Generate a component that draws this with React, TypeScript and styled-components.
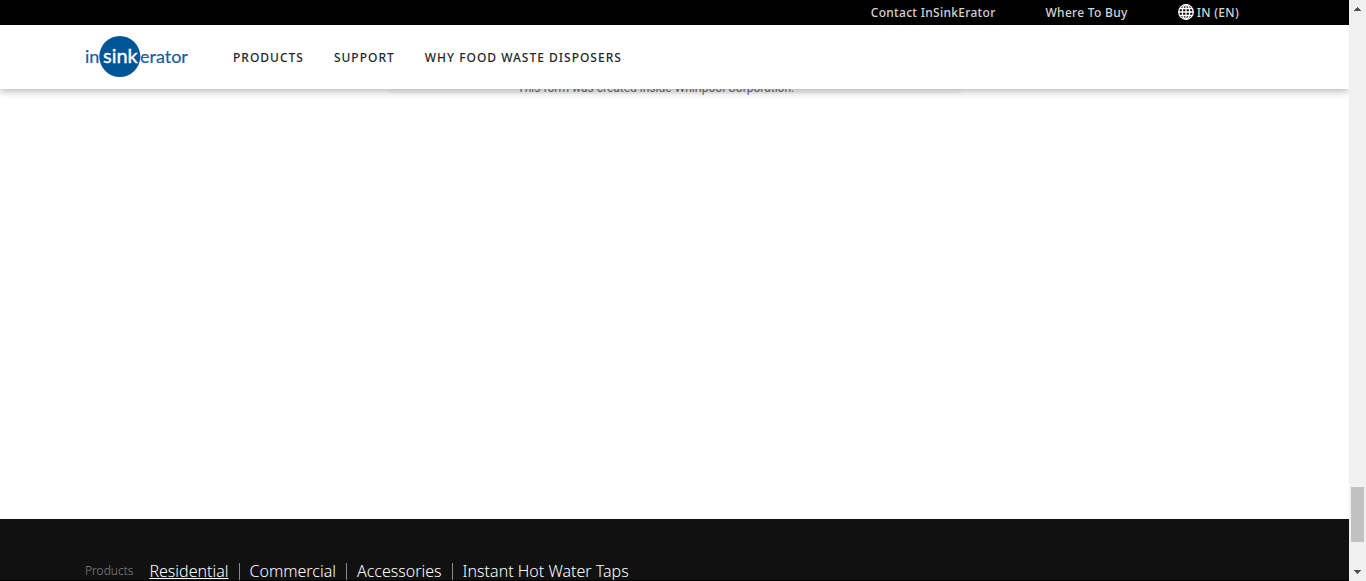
import React from 'react';
import styled, { createGlobalStyle } from 'styled-components';

const GlobalStyle = createGlobalStyle`
  *, *::before, *::after { box-sizing: border-box; }
  html, body { margin: 0; height: 100%; overflow: hidden; }
  body { background: #fff; font-family: "Noto Sans", "Open Sans", sans-serif; }
  #root { height: 100%; }
`;

const Shell = styled.div`
  display: flex;
  height: 100vh;
  overflow: hidden;
`;

const Page = styled.div`
  display: flex;
  flex-direction: column;
  flex: 1;
  min-width: 0;
  overflow: hidden;
`;

const Header = styled.header`
  position: relative;
  z-index: 2;
  flex: none;
  background: #fff;
  box-shadow: 0 2px 8px rgba(0, 0, 0, 0.3);
`;

const UtilityBar = styled.nav`
  display: flex;
  justify-content: flex-end;
  gap: 50px;
  height: 25px;
  padding-right: 110px;
  background: #000;
`;

const UtilityLink = styled.a`
  display: flex;
  align-items: flex-start;
  gap: 3px;
  color: #d4d4d4;
  font-size: 12px;
  font-weight: 500;
  line-height: 26px;
  letter-spacing: 0.025em;
  text-decoration: none;
  white-space: nowrap;
  svg { margin-top: 4px; }
`;

const MainBar = styled.div`
  display: flex;
  align-items: center;
  height: 64px;
  padding: 0 85px;
`;

const LogoLink = styled.a`
  display: block;
  width: 103px;
  height: 42px;
  margin-right: 45px;
  svg { display: block; }
`;

const MainNav = styled.nav`
  display: flex;
  gap: 30px;
  padding-top: 2px;
`;

const NavLink = styled.a`
  color: #22262b;
  font-size: 12px;
  font-weight: 500;
  line-height: 20px;
  letter-spacing: 1px;
  text-decoration: none;
  white-space: nowrap;
`;

const Content = styled.main`
  flex: 1;
  display: flex;
  flex-direction: column;
  align-items: center;
`;

const FormCard = styled.section`
  width: 576px;
  max-width: 100%;
  height: 30px;
  margin-top: -25px;
  padding: 16px 0 0 131px;
  border-radius: 0 0 8px 8px;
  background: #f8f8f8;
`;

const FormNote = styled.p`
  margin: 0;
  color: #6b6b6b;
  font-family: Roboto, sans-serif;
  font-size: 12px;
  line-height: 16px;
  white-space: nowrap;
`;

const Footer = styled.footer`
  flex: none;
  height: 62px;
  padding: 40px 85px 0;
  overflow: hidden;
  background: #111;
  border-bottom: 1px solid #000;
`;

const FooterRow = styled.nav`
  display: flex;
  align-items: center;
`;

const FooterLabel = styled.span`
  margin-right: 16px;
  color: #858585;
  font-size: 12px;
  font-weight: 300;
  line-height: 24px;
`;

const FooterList = styled.ul`
  display: flex;
  margin: 0;
  padding: 0;
  list-style: none;
`;

const FooterItem = styled.li`
  display: flex;
  align-items: center;
  & + &::before {
    content: '';
    width: 1px;
    height: 17px;
    margin: 0 10px;
    background: #8a8a8a;
  }
`;

const FooterLink = styled.a<{ $current?: boolean }>`
  color: #fff;
  font-size: 16px;
  font-weight: 300;
  line-height: 24px;
  text-decoration: ${(p) => (p.$current ? 'underline' : 'none')};
  white-space: nowrap;
`;

const ScrollTrack = styled.div`
  display: flex;
  flex-direction: column;
  align-items: center;
  justify-content: space-between;
  flex: none;
  width: 17px;
  padding: 7px 0;
  background: #f0f0f0;
  svg { display: block; flex: none; }
`;

const ScrollThumb = styled.div`
  width: 13px;
  height: 55px;
  margin: auto 0 28px;
  background: #c1c1c1;
`;

const Logo = () => (
  <svg width="103" height="42" viewBox="0 0 103 42" role="img" aria-label="InSinkErator">
    <circle cx="34.8" cy="20.5" r="20.5" fill="#005596" />
    <g fontFamily="Lato, sans-serif" fontSize="18" fill="#1a5ba3" stroke="#1a5ba3" strokeWidth="0.2">
      <text x="0" y="26.5">in</text>
      <text x="18" y="26.5" fill="#fff" stroke="#fff" strokeWidth="0.4" fontSize="20">sink</text>
      <text x="55" y="26.5">erator</text>
    </g>
  </svg>
);

const Globe = () => (
  <svg width="16" height="16" viewBox="0 0 16 16" fill="none" stroke="#fff" strokeWidth="1.3" aria-hidden="true">
    <circle cx="8" cy="8" r="7.3" />
    <ellipse cx="8" cy="8" rx="3.7" ry="7.3" />
    <path d="M8 .7v14.6M.7 8h14.6M1.8 4.5h12.4M1.8 11.5h12.4" />
  </svg>
);

const Arrow = ({ down = false }: { down?: boolean }) => (
  <svg width="7" height="4" viewBox="0 0 7 4" fill="#505050" shapeRendering="crispEdges" aria-hidden="true">
    <path d={down ? 'M0 0h7v1H6v1H5v1H4v1H3V3H2V2H1V1H0z' : 'M3 0h1v1h1v1h1v1h1v1H0V3h1V2h1V1h1z'} />
  </svg>
);

const navLinks = ['PRODUCTS', 'SUPPORT', 'WHY FOOD WASTE DISPOSERS'];
const footerLinks = ['Residential', 'Commercial', 'Accessories', 'Instant Hot Water Taps'];

export default function App() {
  return (
    <Shell>
      <GlobalStyle />
      <Page>
        <Header>
          <UtilityBar aria-label="Utility">
            <UtilityLink href="#contact">Contact InSinkErator</UtilityLink>
            <UtilityLink href="#buy">Where To Buy</UtilityLink>
            <UtilityLink href="#region"><Globe />IN (EN)</UtilityLink>
          </UtilityBar>
          <MainBar>
            <LogoLink href="#home"><Logo /></LogoLink>
            <MainNav aria-label="Main">
              {navLinks.map((label) => <NavLink key={label} href="#nav">{label}</NavLink>)}
            </MainNav>
          </MainBar>
        </Header>
        <Content>
          <FormCard>
            <FormNote>This form was created inside Whirlpool Corporation.</FormNote>
          </FormCard>
        </Content>
        <Footer>
          <FooterRow aria-label="Products">
            <FooterLabel>Products</FooterLabel>
            <FooterList>
              {footerLinks.map((label, i) => (
                <FooterItem key={label}>
                  <FooterLink href="#footer" $current={i === 0}>{label}</FooterLink>
                </FooterItem>
              ))}
            </FooterList>
          </FooterRow>
        </Footer>
      </Page>
      <ScrollTrack aria-hidden="true">
        <Arrow />
        <ScrollThumb />
        <Arrow down />
      </ScrollTrack>
    </Shell>
  );
}
